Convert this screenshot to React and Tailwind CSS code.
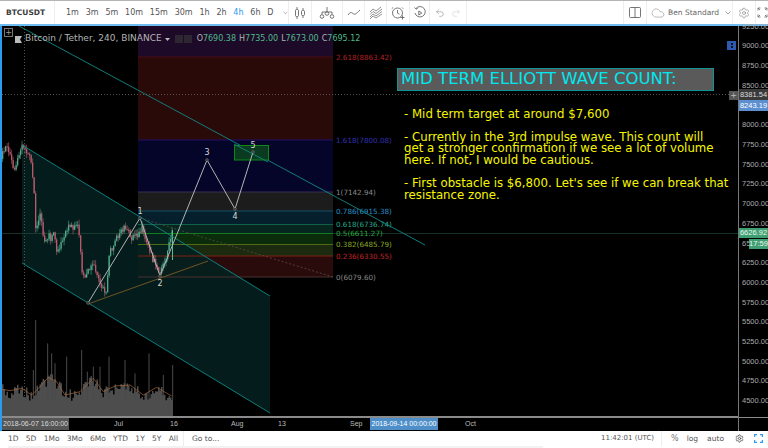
import React from "react";
import { Undo2, Redo2, Settings, Cloud } from "lucide-react";

const rng = (s) => () => ((s = (s * 16807) % 2147483647) - 1) / 2147483646;
const pricePath = [[5,90],[20,45],[32,70],[45,130],[55,85],[70,50],[95,80],[105,180],[110,300],[125,255],[135,340],[150,320],[145,400],[160,300],[175,370],[190,330],[205,290],[235,290],[245,360],[250,450],[280,400],[300,450],[320,500],[330,370],[360,310],[380,290],[400,325],[415,320],[430,290],[445,350],[480,430],[500,390],[517,310]].map(([x, y]) => [x / 3, 130 + y / 3]);
const maPath = [[5,268],[30,272],[65,265],[95,285],[120,260],[145,232],[170,245],[195,285],[240,275],[280,235],[310,275],[345,258],[390,255],[430,285],[470,262],[515,288]].map(([x, y]) => [x / 3, 300 + y / 3]);
const at = (p, x) => {
  for (let i = 1; i < p.length; i++) if (x <= p[i][0]) {
    const t = (x - p[i - 1][0]) / (p[i][0] - p[i - 1][0] || 1);
    return p[i - 1][1] + t * (p[i][1] - p[i - 1][1]);
  }
  return p[p.length - 1][1];
};
const buildCandles = () => {
  const r = rng(4711), out = [];
  let prev = at(pricePath, 2);
  for (let x = 2; x < 173; x += 1.5) {
    const c = at(pricePath, x + 1.5) + (r() - 0.5) * 7;
    const hi = Math.min(prev, c) - r() * 5, lo = Math.max(prev, c) + r() * 5;
    out.push({ x, o: prev, c, hi, lo });
    prev = c;
  }
  return out;
};
const buildVolume = () => {
  const r = rng(991), pts = ["2,417"];
  for (let x = 2; x < 173; x += 1.5) {
    const y = at(maPath, x) + (r() - 0.4) * 13;
    pts.push(`${x},${y}`, `${x + 1.5},${y}`);
  }
  pts.push("173,417");
  return pts.join(" ");
};
const spikes = [[107,60],[143,130],[155,160],[200,170],[245,150],[280,200],[327,170],[375,180],[447,160],[518,195],[100,210],[165,190],[262,215],[300,200],[405,220],[490,225]].map(([x, y]) => [x / 3, 300 + y / 3]);

const zones = [
  [26, 57, "#1d0a28"], [57, 140, "#2a0909"], [140, 192, "#05052a"], [192, 211, "#1c1c1c"],
  [211, 224.5, "#05202c"], [224.5, 233.5, "#06261e"], [233.5, 244.5, "#0a2c0a"], [244.5, 256, "#1c2a10"], [256, 277, "#2a0b0b"],
];
const fibs = [
  [57, "2.618(8863.42)", "#b02024", "#4a0d10"], [140, "1.618(7800.08)", "#3030b0", "#20106a"],
  [192, "1(7142.94)", "#888", "#3a3050"], [211, "0.786(6915.38)", "#2b90c4", "#155068"],
  [224.5, "0.618(6736.74)", "#25a888", "#10604c"], [233.5, "0.5(6611.27)", "#2aa83e", "#127a20"],
  [244.5, "0.382(6485.79)", "#88a822", "#506a14"], [256, "0.236(6330.55)", "#c02424", "#802010"],
  [277, "0(6079.60)", "#888", "#4a3030"],
];
const prices = [[27,"9250.00"],[46,"9000.00"],[66,"8750.00"],[86,"8500.00"],[125,"8000.00"],[145,"7750.00"],[165,"7500.00"],[184,"7250.00"],[204,"7000.00"],[224,"6750.00"],[263,"6250.00"],[283,"6000.00"],[303,"5750.00"],[322,"5500.00"],[342,"5250.00"],[362,"5000.00"],[381,"4750.00"],[401,"4500.00"]];
const intervals = ["1m","3m","5m","10m","15m","30m","1h","2h","4h","6h","D"];

const ChartDrawing = () => (
  <svg viewBox="2 26 736 391" width="736" height="391" className="block" fontFamily="'DejaVu Sans', sans-serif">
    <rect x="2" y="26" width="736" height="391" fill="#000" />
    {zones.map(([a, b, c]) => <rect key={a} x="138" y={a} width="195" height={b - a} fill={c} />)}
    <polygon points="22,145 270,296 270,413 22,263" fill="#04201f" fillOpacity="0.9" />
    <line x1="24.5" y1="26" x2="24.5" y2="417" stroke="#666" strokeDasharray="1 2" strokeWidth="0.8" />
    <line x1="2" y1="94.5" x2="738" y2="94.5" stroke="#666" strokeDasharray="1 2" strokeWidth="0.8" />
    <line x1="2" y1="233.5" x2="738" y2="233.5" stroke="#1d4034" strokeWidth="0.8" />
    {fibs.map(([y, t, c, l]) => (
      <g key={t}>
        <line x1="138" y1={y} x2="333" y2={y} stroke={l} />
        <text x="336" y={y + 2.5} fontSize="7.2" fill={c}>{t}</text>
      </g>
    ))}
    <polygon points={buildVolume()} fill="#4d4d4d" />
    {spikes.map(([x, y]) => <line key={x} x1={x} y1={y} x2={x} y2="400" stroke="#4a4a4a" strokeWidth="1" />)}
    <polyline points={maPath.map((p) => p.join(",")).join(" ")} fill="none" stroke="#a8663a" strokeWidth="0.7" />
    {buildCandles().map((k) => {
      const col = k.c < k.o ? "#4fa98c" : "#b85a6c";
      return (
        <g key={k.x}>
          <line x1={k.x + 0.6} y1={k.hi} x2={k.x + 0.6} y2={k.lo} stroke={col} strokeWidth="0.6" />
          <rect x={k.x} y={Math.min(k.o, k.c)} width="1.3" height={Math.max(1, Math.abs(k.o - k.c))} fill={col} />
        </g>
      );
    })}
    <line x1="172.5" y1="230" x2="172.5" y2="260" stroke="#5fb890" />
    <path d="M22 145 L270 296" fill="none" stroke="#0e8a88" strokeWidth="0.9" />
    <path d="M22 263 L270 413" fill="none" stroke="#0e8a88" strokeWidth="0.9" />
    <line x1="19" y1="26" x2="425" y2="245" stroke="#0e8a88" strokeWidth="0.9" />
    <line x1="88" y1="304" x2="208" y2="261" stroke="#7a5a24" strokeWidth="0.9" />
    <line x1="140" y1="218" x2="333" y2="277" stroke="#5c4a4a" strokeWidth="0.8" strokeDasharray="2 2" />
    <rect x="234.5" y="145.5" width="34" height="14.5" fill="#0a3a20" stroke="#0c8a14" />
    <line x1="234" y1="144" x2="268" y2="162" stroke="#0e8a88" strokeWidth="0.9" />
    <polyline points="88,303 140,218 160,276 207,160 235,209 253,152" fill="none" stroke="#b4b4b4" strokeWidth="1" />
    {[[88,303],[140,218],[160,276],[207,160],[235,209],[253,152]].map(([x, y]) => <circle key={x} cx={x} cy={y} r="1.3" fill="#111" stroke="#999" strokeWidth="0.6" />)}
    {[["1",140,214],["2",160,286],["3",207,155],["4",235,219],["5",253,148]].map(([t, x, y]) => (
      <text key={t} x={x} y={y} fontSize="8" textAnchor="middle" fill="#d8d8d8">{t}</text>
    ))}
  </svg>
);

const Btn = ({ className = "", children }) => <div className={`flex items-center justify-center h-full border-r border-[#eeeeee] ${className}`}>{children}</div>;

export default function App() {
  return (
    <div className="w-[768px] h-[448px] flex flex-col bg-white overflow-hidden text-[#555] font-['DejaVu_Sans',sans-serif]">
      <div className="h-[1px] bg-[#b4b4b4]" />
      <header className="h-[23px] flex items-center bg-white text-[8px]">
        <Btn className="w-[55px] justify-start pl-[6px] text-[#3c3c3c] text-[7.500px] font-semibold">BTCUSDT</Btn>
        <Btn className="w-[234px] justify-start gap-[6.800px] pl-[11px]">
          {intervals.map((t) => <span key={t} className={t === "4h" ? "text-[#2e9bf0]" : ""}>{t}</span>)}
          <svg width="6" height="4" viewBox="0 0 6 4" className="ml-[3px]"><path d="M.5.5 3 3 5.500.5" fill="none" stroke="#888" strokeWidth=".8" /></svg>
        </Btn>
        <Btn className="w-[23px]">
          <svg width="14" height="14" viewBox="0 0 14 14" fill="none" stroke="#666" strokeWidth=".9"><rect x="2.500" y="3.500" width="3" height="7" rx="1" /><path d="M4 1v2.500M4 10.500V13" /><rect x="8.500" y="4.500" width="3" height="5" rx="1" /><path d="M10 2v2.500M10 9.500V12" /></svg>
        </Btn>
        <Btn className="w-[31px]">
          <svg width="16" height="14" viewBox="0 0 16 14" fill="none" stroke="#666" strokeWidth=".9"><circle cx="3" cy="10.500" r="1.800" /><circle cx="13" cy="10.500" r="1.800" /><circle cx="8" cy="7.500" r="1.800" /><path d="M8 1v4.700M3 8.700V6h10v2.700" /></svg>
        </Btn>
        <Btn className="w-[22px]">
          <svg width="14" height="10" viewBox="0 0 14 10" fill="none" stroke="#666" strokeWidth=".9"><path d="M1 7c2-3 3-3 5-1.500S9 6 13 2" /></svg>
        </Btn>
        <Btn className="w-[22px]">
          <svg width="14" height="14" viewBox="0 0 14 14" fill="none" stroke="#777" strokeWidth=".8"><path d="M1 6l3-3 3 2 5-4M1 8.500l3-3 3 2 6-4.500M1 11l3-3 3 2 6-4.500M1 13l3-3 3 2 6-4" /></svg>
        </Btn>
        <Btn className="w-[23px]">
          <svg width="14" height="14" viewBox="0 0 14 14" fill="none" stroke="#666" strokeWidth=".9"><circle cx="6.500" cy="7" r="5" /><path d="M6.500 4v3.200l2 1M2 1.500.8 2.700M11 1.500l1.200 1.200" /><path d="M11.500 9.500v4M9.500 11.500h4" /></svg>
        </Btn>
        <Btn className="w-[20px]">
          <svg width="14" height="14" viewBox="0 0 14 14" fill="none" stroke="#666" strokeWidth=".9"><path d="M3 2.500A5.200 5.200 0 1 1 2 7" /><path d="M1.500 1.500 3 3.200l1.800-1" /><path d="M5.800 5v4l3-2z" /></svg>
        </Btn>
        <Btn className="w-[37px] gap-[6px]">
          <Undo2 size={10} strokeWidth={1.3} color="#888" />
          <Redo2 size={10} strokeWidth={1.3} color="#ccc" />
        </Btn>
        <div className="w-[156px]" />
        <Btn className="w-[24px] border-l">
          <svg width="12" height="11" viewBox="0 0 12 11" fill="none" stroke="#666" strokeWidth=".9"><rect x=".5" y=".5" width="11" height="10" rx="1" /><path d="M6 .5v10" /></svg>
        </Btn>
        <Btn className="w-[86px] justify-start pl-[4px] gap-[3px] whitespace-nowrap">
          <Cloud size={14} strokeWidth={0.9} color="#777" strokeDasharray="2 1.500" className="shrink-0" />
          <span className="text-[#666] text-[7.500px] mr-[3px]">Ben Standard</span>
          <svg width="6" height="4" viewBox="0 0 6 4" className="shrink-0"><path d="M.5.5 3 3 5.500.5" fill="none" stroke="#888" strokeWidth=".8" /></svg>
        </Btn>
        <Btn className="w-[23px]"><Settings size={12} strokeWidth={1} color="#666" /></Btn>
        <div className="flex-1 flex items-center justify-center">
          <svg width="11" height="11" viewBox="0 0 11 11" fill="none" stroke="#777" strokeWidth=".9"><path d="M1 3.500V1h2.500M7.500 1H10v2.500M1 7.500V10h2.500M7.500 10H10V7.500M1 1l2 2M10 1 8 3M1 10l2-2M10 10 8 8" /></svg>
        </div>
      </header>
      <div className="h-[2px] bg-[#6fbcf2]" />

      <main className="h-[405px] flex bg-black border-l-2 border-[#2a9df0]">
        <div className="w-[736px] flex flex-col relative">
          <ChartDrawing />
          <div className="h-[14px] border-t-2 border-[#8a8a8a] -mt-[1px] relative text-[7px] text-[#bbb] font-['Liberation_Sans',sans-serif]">
            <span className="absolute left-0 top-0 w-[67px] h-[12px] flex items-center justify-center bg-[#555] text-[#ddd]">2018-06-07 16:00:00</span>
            {[["Jul",112],["16",168],["Aug",229],["13",276],["Sep",348],["Oct",463]].map(([t, x]) => <span key={t} className="absolute top-[1px]" style={{ left: x }}>{t}</span>)}
            <span className="absolute left-[368px] top-0 w-[68px] h-[12px] flex items-center justify-center bg-[#4f8fc9] text-white">2018-09-14 00:00:00</span>
          </div>

          <div className="absolute left-[2px] top-[2px] w-[9px] h-[9px] border border-[#777] flex items-center justify-center text-[8px] leading-none text-[#999]">+</div>
          <div className="absolute left-[13px] top-0 h-[26px] flex items-center text-[8px] text-[#b4b4b4] whitespace-nowrap">
            <svg width="7" height="7" viewBox="0 0 7 7" className="mr-[3px]"><path d="M0 0h7L5 3.500 7 7H0z" fill="#bbb" /></svg>
            <span className="text-[9px] mr-[3px]">Bitcoin / Tether, 240, BINANCE</span>
            <svg width="5" height="3" viewBox="0 0 5 3"><path d="M0 0h5L2.500 3z" fill="#bbb" /></svg>
            <span className="w-[8px] h-[8px] bg-[#2e2630] ml-[5px]" />
            <span className="w-[8px] h-[8px] bg-[#2e2630] ml-[1px]" />
            <span className="ml-[5px]">O<span className="text-[#4fb98a]">7690.38</span></span>
            <span className="ml-[3px]">H<span className="text-[#4fb98a]">7735.00</span></span>
            <span className="ml-[3px]">L<span className="text-[#4fb98a]">7673.00</span></span>
            <span className="ml-[3px]">C<span className="text-[#4fb98a]">7695.12</span></span>
          </div>

          <div className="absolute left-[395px] top-[42px] w-[317px] h-[23px] bg-[#5a5a5a] border border-[#0d9494] pl-[3px] flex items-center text-[16.500px] leading-none text-[#00e8ee] whitespace-nowrap">MID TERM ELLIOTT WAVE COUNT:</div>
          <div className="absolute left-[402px] top-[83px] w-[336px] text-[11.750px] leading-[11.700px] text-[#f6f600] whitespace-nowrap">
            <p className="mb-[11px]">- Mid term target at around $7,600</p>
            <p className="mb-[11px]">- Currently in the 3rd impulse wave. This count will<br />get a stronger confirmation if we see a lot of volume<br />here. If not, I would be cautious.</p>
            <p>- First obstacle is $6,800. Let's see if we can break that<br />resistance zone.</p>
          </div>
          <div className="absolute left-[725px] top-[15px] w-[9px] h-[9px] bg-[#2d5ab0] flex flex-col items-center justify-center gap-[1px]">
            <span className="w-[2px] h-[2px] bg-[#111]" />
            <span className="w-[2px] h-[2px] bg-[#111]" />
          </div>
          <div className="absolute left-[727px] top-[65px] w-[9px] h-[9px] bg-[#555] flex items-center justify-center text-[8px] leading-none text-[#bbb]">+</div>
        </div>

        <aside className="flex-1 relative border-l border-[#777] text-[7.500px] text-[#aaa] font-['Liberation_Sans',sans-serif]">
          {prices.map(([y, t]) => <span key={t} className="absolute left-[3px] leading-none" style={{ top: y - 30 }}>{t}</span>)}
          <span className="absolute left-0 right-0 top-[63px] h-[11px] flex items-center justify-center bg-[#3a3a3a] text-[#ddd]">8381.54</span>
          <span className="absolute left-0 right-0 top-[74px] h-[11px] flex items-center justify-center bg-[#5b8fd0] text-white">8243.19</span>
          <span className="absolute left-0 right-0 top-[202px] h-[10px] flex items-center justify-center bg-[#3f9f72] text-[#e8f8f0]">6626.92</span>
          <span className="absolute left-[3px] top-[214px] leading-none">65</span>
          <span className="absolute left-[10px] right-0 top-[213px] h-[10px] flex items-center justify-center bg-[#3f9f72] text-[#e8f8f0]">17:59</span>
          <span className="absolute left-0 right-0 top-[391px] h-[1px] bg-[#8a8a8a]" />
        </aside>
      </main>

      <footer className="flex-1 flex flex-col bg-white text-[8px]">
        <div className="h-[15px] flex items-center">
          <div className="flex items-center gap-[7.300px] pl-[8px] w-[184px] border-r border-[#eeeeee] h-full text-[7.500px]">
            {["1D","5D","1Mo","3Mo","6Mo","YTD","1Y","5Y","All"].map((t) => <span key={t}>{t}</span>)}
          </div>
          <span className="ml-[8px] text-[7.500px]">Go to...</span>
          <span className="ml-auto pr-[7px] mr-[9px] border-r border-[#eeeeee] h-full flex items-center text-[7px]">11:42:01 (UTC)</span>
          <span className="text-[#777]">%</span>
          <span className="ml-[8px] text-[7.500px]">log</span>
          <span className="ml-[9px] text-[7.500px]">auto</span>
          <Settings size={9} strokeWidth={2} color="#444" className="ml-[11px]" />
          <svg width="9" height="9" viewBox="0 0 9 9" fill="none" stroke="#2e9bf0" strokeWidth="1.200" className="ml-[10px] mr-[5px]"><path d="M.6 3V.6H3M6 .6h2.400V3M.6 6v2.400H3M6 8.400h2.400V6" /></svg>
        </div>
        <div className="h-[2px] ml-[8px] w-[535px] bg-[#f2f2f2]" />
      </footer>
    </div>
  );
}
